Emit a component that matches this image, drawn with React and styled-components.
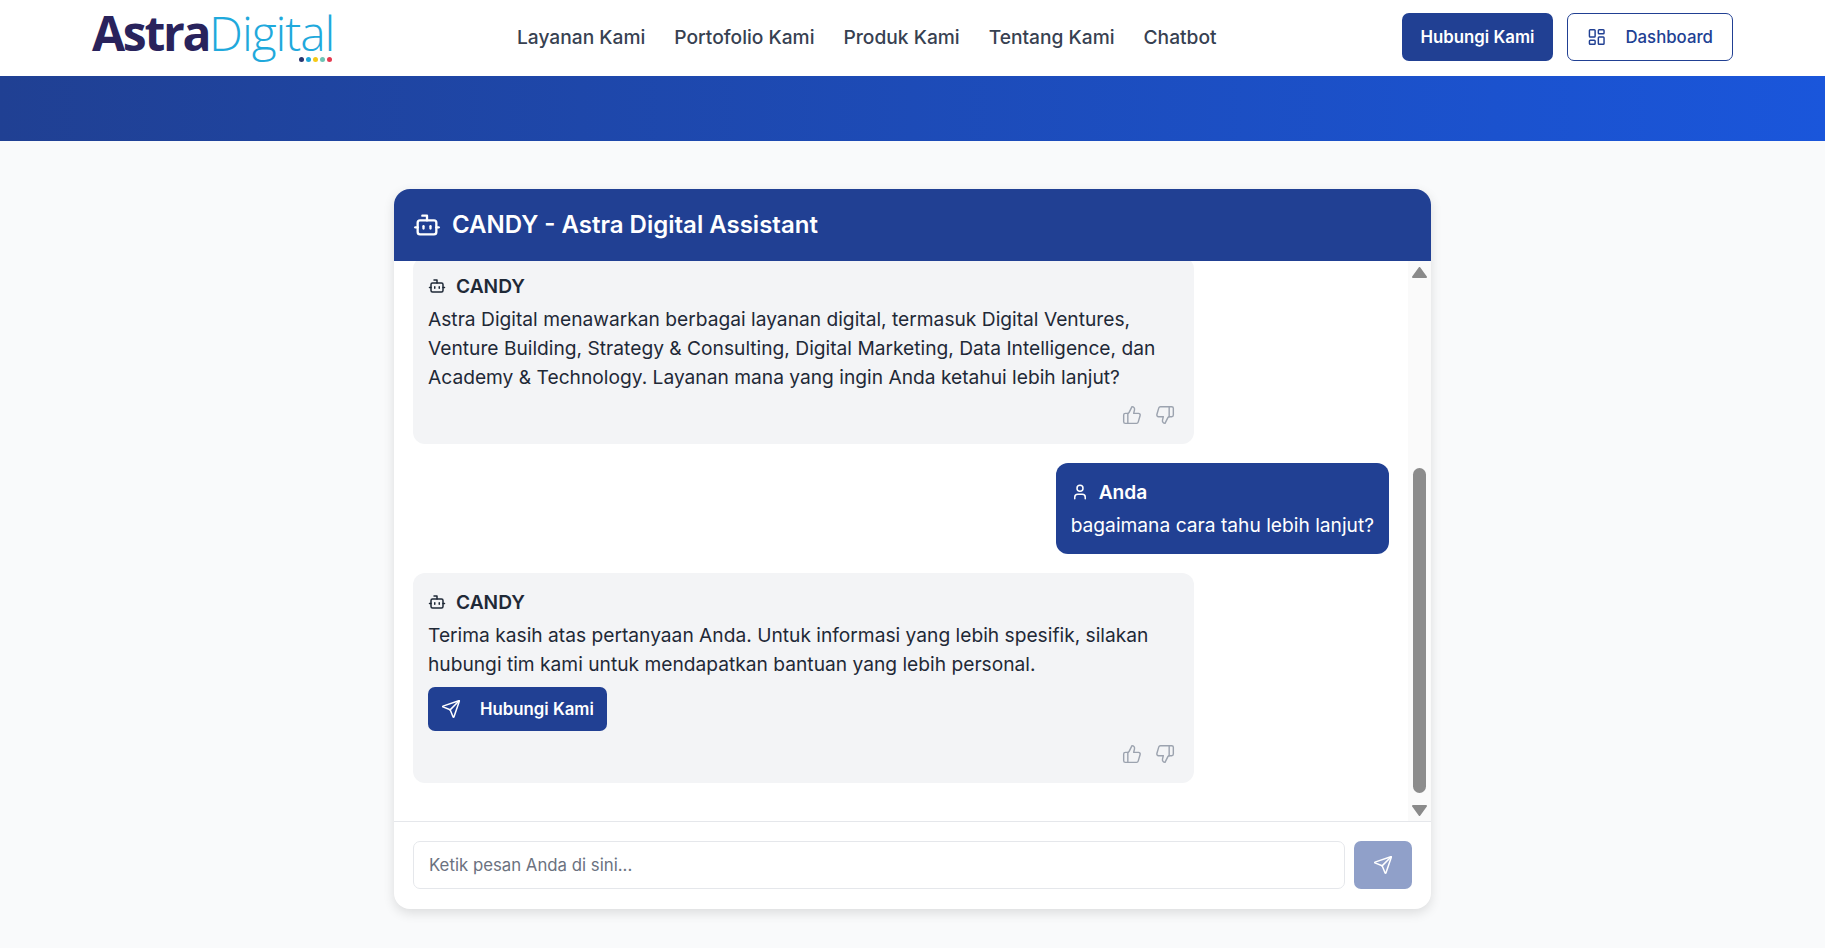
import React, { useLayoutEffect, useRef } from 'react';
import styled, { createGlobalStyle } from 'styled-components';
import { Bot, LayoutDashboard, Send, ThumbsDown, ThumbsUp, User } from 'lucide-react';

const GlobalStyle = createGlobalStyle`
  * {
    box-sizing: border-box;
  }

  html, body {
    margin: 0;
    padding: 0;
    height: 100%;
    overflow: hidden;
  }

  body {
    background: #f9fafb;
    color: #1f2937;
    font-family: Inter, "Liberation Sans", sans-serif;
  }
`;

const NAVY = '#214093';

const Navbar = styled.header`
  height: 76px;
  background: #fff;
  display: flex;
  align-items: center;
  padding: 0 92px 2px;
`;

const Logo = styled.div`
  width: 240px;
  flex: none;
  height: 76px;
  display: flex;
  flex-direction: column;
  padding-top: 4px;
`;

const LogoText = styled.div`
  font-family: "Open Sans", sans-serif;
  font-size: 48px;
  line-height: 60px;
  white-space: nowrap;
`;

const LogoBold = styled.span`
  color: #29235c;
  font-weight: 700;
  letter-spacing: -2.3px;
`;

const LogoLight = styled.span`
  color: #1fa9dc;
  font-weight: 300;
  letter-spacing: -1.1px;
`;

const LogoDots = styled.div`
  display: flex;
  justify-content: flex-end;
  gap: 2px;
  margin-top: -6px;
`;

const LogoDot = styled.span`
  width: 5px;
  height: 5px;
  border-radius: 50%;
  background: ${(p) => p.$color};
`;

const NavLinks = styled.nav`
  display: flex;
  gap: 29px;
  margin-left: 185px;
`;

const NavLink = styled.a`
  font-size: 19.2px;
  font-weight: 500;
  color: #374151;
`;

const NavActions = styled.div`
  margin-left: auto;
  display: flex;
  gap: 14px;
`;

const PrimaryButton = styled.button`
  height: 48px;
  width: 151px;
  border: 0;
  border-radius: 7px;
  background: ${NAVY};
  color: #fff;
  font: 600 16.8px Inter, sans-serif;
`;

const DashboardButton = styled.button`
  height: 48px;
  width: 166px;
  border: 1px solid ${NAVY};
  border-radius: 7px;
  background: #fff;
  color: ${NAVY};
  font: 500 16.8px Inter, sans-serif;
  display: flex;
  align-items: center;
  gap: 19px;
  padding: 0 19px;
`;

const Hero = styled.div`
  height: 65px;
  background: linear-gradient(90deg, #204093, #1a56db);
`;

const Main = styled.main`
  display: flex;
  justify-content: center;
  padding-top: 48px;
`;

const ChatCard = styled.section`
  width: 1037px;
  height: 720px;
  background: #fff;
  border-radius: 16px;
  box-shadow: 0 4px 12px rgba(0, 0, 0, 0.12);
  display: flex;
  flex-direction: column;
  overflow: hidden;
`;

const ChatHeader = styled.div`
  height: 72px;
  flex: none;
  background: ${NAVY};
  color: #fff;
  display: flex;
  align-items: center;
  gap: 11px;
  padding: 0 19px 1px;
  font-size: 24px;
  font-weight: 600;
`;

const ChatBody = styled.div`
  flex: 1;
  min-height: 0;
  display: flex;
  border-bottom: 1px solid #e5e7eb;
`;

const MessageList = styled.div`
  flex: 1;
  min-width: 0;
  overflow-y: scroll;
  scrollbar-width: none;
  padding: 0 19px 38px;
  display: flex;
  flex-direction: column;
  gap: 19px;
`;

const Bubble = styled.article`
  flex: none;
  border-radius: 12px;
  padding: 15px 15px 14px;
  font-size: 19.2px;
  line-height: 28.8px;
  align-self: ${(p) => (p.$user ? 'flex-end' : 'flex-start')};
  width: ${(p) => (p.$user ? 'auto' : '781px')};
  background: ${(p) => (p.$user ? NAVY : '#f3f4f6')};
  color: ${(p) => (p.$user ? '#fff' : '#1f2937')};
`;

const Sender = styled.div`
  display: flex;
  align-items: center;
  gap: 10px;
  font-weight: 600;
  margin-bottom: 4.4px;
`;

const Feedback = styled.div`
  display: flex;
  justify-content: flex-end;
  gap: 13px;
  padding-right: 4px;
  margin: 13px 0 5px;
  color: #9ca3af;
`;

const ContactButton = styled.button`
  display: flex;
  align-items: center;
  gap: 19px;
  height: 44px;
  margin-top: 9px;
  padding: 0 13px;
  border: 0;
  border-radius: 7px;
  background: ${NAVY};
  color: #fff;
  font: 600 16.8px Inter, sans-serif;
`;

const Scrollbar = styled.div`
  width: 23px;
  flex: none;
  background: #fafafa;
  display: flex;
  flex-direction: column;
  align-items: center;
  padding: 6px 0 5px;
`;

const ScrollArrow = styled.svg`
  flex: none;
  display: block;
  width: 15px;
  height: 11px;
  fill: #8a8a8a;
  stroke: #8a8a8a;
  stroke-width: 2;
  stroke-linejoin: round;
  transform: ${(p) => (p.$down ? 'rotate(180deg)' : 'none')};
`;

const ScrollTrack = styled.div`
  flex: 1;
  display: flex;
  flex-direction: column;
  justify-content: flex-end;
  padding-bottom: 12px;
`;

const ScrollThumb = styled.div`
  width: 13px;
  height: 325px;
  border-radius: 7px;
  background: #8c8c8c;
`;

const Composer = styled.form`
  flex: none;
  height: 87px;
  display: flex;
  gap: 9px;
  padding: 19px 19px 20px 19px;
`;

const MessageInput = styled.input`
  flex: 1;
  min-width: 0;
  border: 1px solid #e5e7eb;
  border-radius: 7px;
  padding: 0 15px;
  font: 400 16.8px Inter, sans-serif;
  color: #1f2937;
  outline: none;

  &::placeholder {
    color: #6b7280;
  }
`;

const SendButton = styled.button`
  width: 58px;
  flex: none;
  border: 0;
  border-radius: 7px;
  background: #90a0c9;
  color: #fff;
  display: flex;
  align-items: center;
  justify-content: center;
`;

const Arrow = ({ down }) => (
  <ScrollArrow $down={down} viewBox="0 0 15 11">
    <polygon points="7.5,1 14,10 1,10" />
  </ScrollArrow>
);

const BotMessage = ({ children, text }) => (
  <Bubble>
    <Sender>
      <Bot size={18} strokeWidth={2} />
      CANDY
    </Sender>
    {text}
    {children}
    <Feedback>
      <ThumbsUp size={20} strokeWidth={1.7} />
      <ThumbsDown size={20} strokeWidth={1.7} />
    </Feedback>
  </Bubble>
);

const dots = ['#29356f', '#1fa9dc', '#f6c915', '#6cc3b5', '#e5394f'];

const App = () => {
  const listRef = useRef(null);

  // chat stays pinned to the newest message
  useLayoutEffect(() => {
    listRef.current.scrollTop = listRef.current.scrollHeight;
  }, []);

  return (
    <>
      <GlobalStyle />
      <Navbar>
        <Logo>
          <LogoText>
            <LogoBold>Astra</LogoBold>
            <LogoLight>Digital</LogoLight>
          </LogoText>
          <LogoDots>
            {dots.map((color) => (
              <LogoDot key={color} $color={color} />
            ))}
          </LogoDots>
        </Logo>
        <NavLinks>
          <NavLink>Layanan Kami</NavLink>
          <NavLink>Portofolio Kami</NavLink>
          <NavLink>Produk Kami</NavLink>
          <NavLink>Tentang Kami</NavLink>
          <NavLink>Chatbot</NavLink>
        </NavLinks>
        <NavActions>
          <PrimaryButton>Hubungi Kami</PrimaryButton>
          <DashboardButton>
            <LayoutDashboard size={20} strokeWidth={1.8} />
            Dashboard
          </DashboardButton>
        </NavActions>
      </Navbar>
      <Hero />
      <Main>
        <ChatCard>
          <ChatHeader>
            <Bot size={28} strokeWidth={2} />
            CANDY - Astra Digital Assistant
          </ChatHeader>
          <ChatBody>
            <MessageList ref={listRef}>
              <BotMessage text="Astra Digital menawarkan berbagai layanan digital, termasuk Digital Ventures, Venture Building, Strategy & Consulting, Digital Marketing, Data Intelligence, dan Academy & Technology. Layanan mana yang ingin Anda ketahui lebih lanjut?" />
              <Bubble $user>
                <Sender>
                  <User size={18} strokeWidth={2} />
                  Anda
                </Sender>
                bagaimana cara tahu lebih lanjut?
              </Bubble>
              <BotMessage text="Terima kasih atas pertanyaan Anda. Untuk informasi yang lebih spesifik, silakan hubungi tim kami untuk mendapatkan bantuan yang lebih personal.">
                <ContactButton type="button">
                  <Send size={20} strokeWidth={1.8} />
                  Hubungi Kami
                </ContactButton>
              </BotMessage>
            </MessageList>
            <Scrollbar>
              <Arrow />
              <ScrollTrack>
                <ScrollThumb />
              </ScrollTrack>
              <Arrow down />
            </Scrollbar>
          </ChatBody>
          <Composer>
            <MessageInput placeholder="Ketik pesan Anda di sini..." />
            <SendButton type="button">
              <Send size={20} strokeWidth={1.8} />
            </SendButton>
          </Composer>
        </ChatCard>
      </Main>
    </>
  );
};

export default App;
